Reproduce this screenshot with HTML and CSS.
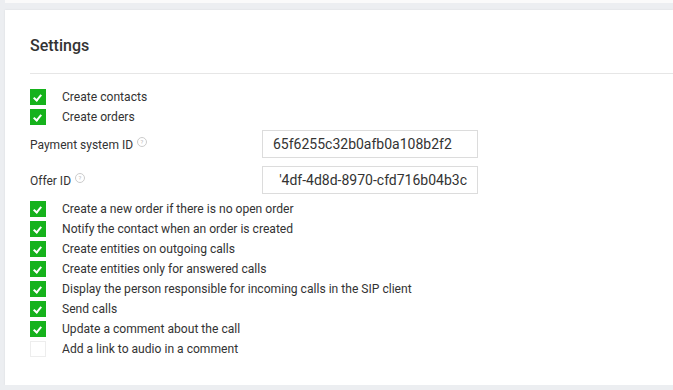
FILE: index.html
```html
<!DOCTYPE html>
<html lang="en">
<head>
    <meta charset="UTF-8">
    <title>Settings</title>
    <link rel="stylesheet" href="styles.css">
</head>
<body>

<div class="prev-card"></div>

<!-- Settings card -->
<section class="card">
    <h1 class="card-title">Settings</h1>

    <div class="checks">
        <label class="check"><span class="box on"></span>Create contacts</label>
        <label class="check"><span class="box on"></span>Create orders</label>
    </div>

    <div class="field">
        <span class="field-label">Payment system ID <span class="help">?</span></span>
        <div class="input">65f6255c32b0afb0a108b2f2</div>
    </div>
    <div class="field">
        <span class="field-label">Offer ID <span class="help">?</span></span>
        <div class="input end">'4df-4d8d-8970-cfd716b04b3c</div>
    </div>

    <div class="checks">
        <label class="check"><span class="box on"></span>Create a new order if there is no open order</label>
        <label class="check"><span class="box on"></span>Notify the contact when an order is created</label>
        <label class="check"><span class="box on"></span>Create entities on outgoing calls</label>
        <label class="check"><span class="box on"></span>Create entities only for answered calls</label>
        <label class="check"><span class="box on"></span>Display the person responsible for incoming calls in the SIP client</label>
        <label class="check"><span class="box on"></span>Send calls</label>
        <label class="check"><span class="box on"></span>Update a comment about the call</label>
        <label class="check"><span class="box"></span>Add a link to audio in a comment</label>
    </div>
</section>

</body>
</html>
```

FILE: styles.css
```css
body {
    margin: 0;
    padding: 0;
    background-color: #eceef1;
    font-family: Roboto, "Liberation Sans", sans-serif;
    color: #333;
}

.prev-card {
    height: 3px;
    margin-left: 5px;
    background-color: #fafafa;
}

.card {
    margin: 7px 0 0 5px;
    height: 375px;
    background-color: #fff;
    box-shadow: 0 0 2px rgba(0, 0, 0, 0.08);
    padding: 0 0 0 25px;
    box-sizing: border-box;
}

.card-title {
    margin: 0;
    padding: 26px 0 17px;
    font-size: 16px;
    font-weight: 500;
    color: #333;
    line-height: 20px;
    border-bottom: 1px solid #e6e6e6;
}

.checks {
    display: flex;
    flex-direction: column;
}

.card-title + .checks {
    margin-top: 13px;
}

.check {
    display: flex;
    align-items: center;
    height: 20px;
    font-size: 12.1px;
    color: #333;
}

.box {
    width: 16px;
    height: 16px;
    box-sizing: border-box;
    border: 1px solid #ededed;
    background-color: #fff;
    margin-right: 16px;
    position: relative;
}

.box.on {
    background-color: #16b21c;
    border-color: #16b21c;
}

.box.on::after {
    content: "";
    position: absolute;
    left: 4px;
    top: 3px;
    width: 3px;
    height: 6px;
    border: solid #fff;
    border-width: 0 2px 2px 0;
    transform: rotate(40deg);
}

.field {
    display: flex;
    align-items: center;
    height: 28px;
    margin-top: 3px;
}

.field + .field {
    margin-top: 8px;
}

.field + .checks {
    margin-top: 5px;
}

.field-label {
    width: 232px;
    font-size: 12px;
    color: #333;
}

.help {
    display: inline-block;
    width: 8px;
    height: 8px;
    border: 1px solid #ccc;
    border-radius: 50%;
    font-size: 6px;
    line-height: 8px;
    text-align: center;
    color: #bbb;
    vertical-align: 5px;
    margin-left: 1px;
}

.input {
    width: 216px;
    height: 28px;
    box-sizing: border-box;
    border: 1px solid #dcdcdc;
    padding: 0 10px;
    font-size: 14px;
    line-height: 26px;
    color: #333;
    white-space: nowrap;
    overflow: hidden;
}

.input.end {
    text-align: right;
}
```
